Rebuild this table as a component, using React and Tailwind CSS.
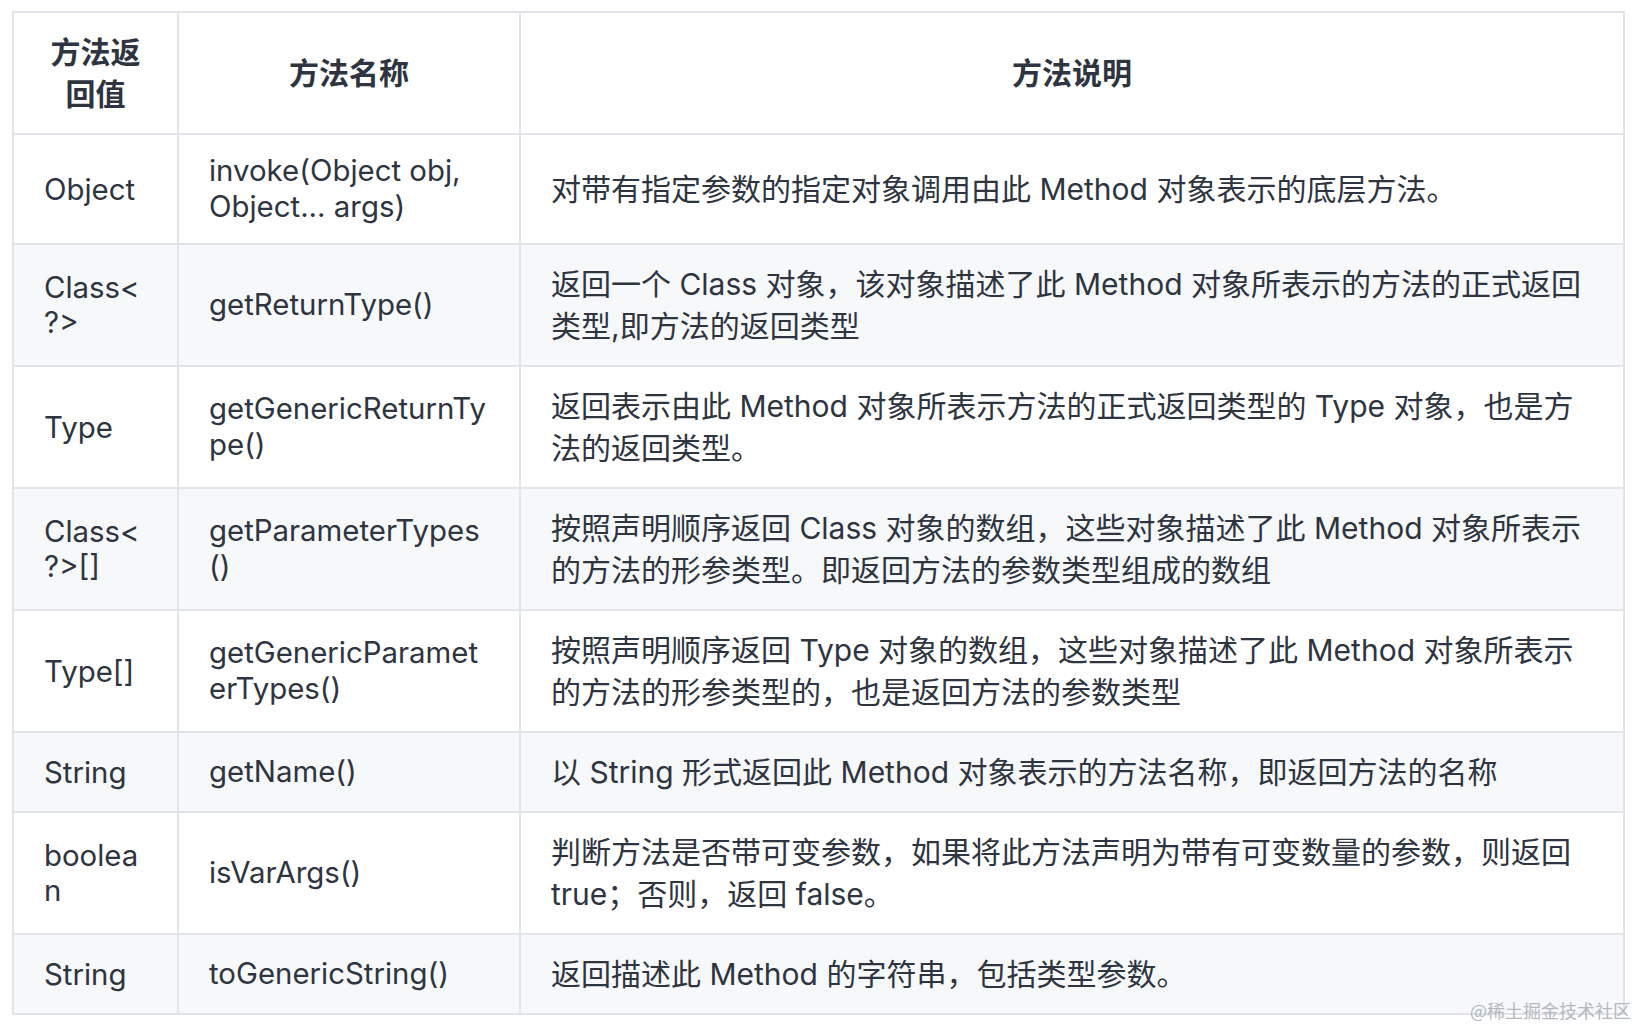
import React from "react";

const rows = [
  ["Object", "invoke(Object obj, Object... args)", "对带有指定参数的指定对象调用由此 Method 对象表示的底层方法。"],
  ["Class<?>", "getReturnType()", "返回一个 Class 对象，该对象描述了此 Method 对象所表示的方法的正式返回类型,即方法的返回类型"],
  ["Type", "getGenericReturnType()", "返回表示由此 Method 对象所表示方法的正式返回类型的 Type 对象，也是方法的返回类型。"],
  ["Class<?>[]", "getParameterTypes()", "按照声明顺序返回 Class 对象的数组，这些对象描述了此 Method 对象所表示的方法的形参类型。即返回方法的参数类型组成的数组"],
  ["Type[]", "getGenericParameterTypes()", "按照声明顺序返回 Type 对象的数组，这些对象描述了此 Method 对象所表示的方法的形参类型的，也是返回方法的参数类型"],
  ["String", "getName()", "以 String 形式返回此 Method 对象表示的方法名称，即返回方法的名称"],
  ["boolean", "isVarArgs()", "判断方法是否带可变参数，如果将此方法声明为带有可变数量的参数，则返回 true；否则，返回 false。"],
  ["String", "toGenericString()", "返回描述此 Method 的字符串，包括类型参数。"],
];

export default function App() {
  return (
    <div
      className="relative min-h-[1026px] w-[1638px] bg-white pl-[12px] pt-[11px] text-[#2e3440]"
      style={{ fontFamily: 'Inter, "Noto Sans CJK SC", sans-serif' }}
    >
      <table className="w-[1613px] table-fixed border-separate border-spacing-0 border-l-2 border-t-2 border-[#e1e4e8] text-[30px]">
        <colgroup>
          <col className="w-[165px]" />
          <col className="w-[342px]" />
          <col className="w-[1104px]" />
        </colgroup>
        <thead>
          <tr>
            <th className="border-b-2 border-r-2 border-[#e1e4e8] px-[30px] py-[18px] text-center align-middle font-semibold leading-[42px]">
              方法返回值
            </th>
            <th className="border-b-2 border-r-2 border-[#e1e4e8] px-[30px] py-[18px] text-center align-middle font-semibold leading-[42px]">
              方法名称
            </th>
            <th className="border-b-2 border-r-2 border-[#e1e4e8] px-[30px] py-[18px] text-center align-middle font-semibold leading-[42px]">
              方法说明
            </th>
          </tr>
        </thead>
        <tbody>
          {rows.map((r, i) => (
            <tr key={i} className={i % 2 === 1 ? "bg-[#f6f8fa]" : "bg-white"}>
              <td className="break-words border-b-2 border-r-2 border-[#e1e4e8] px-[30px] py-[18px] align-middle text-[29.4px] leading-[35px]">
                {r[0]}
              </td>
              <td className="break-words border-b-2 border-r-2 border-[#e1e4e8] px-[30px] py-[18px] align-middle text-[29.4px] leading-[36px]">
                {r[1]}
              </td>
              <td className="break-words border-b-2 border-r-2 border-[#e1e4e8] px-[30px] py-[18px] align-middle leading-[42px]">
                {r[2]}
              </td>
            </tr>
          ))}
        </tbody>
      </table>
      <div
        className="absolute left-[1470px] top-[999px] text-[18px] leading-[22px] text-[#b4b8bf]"
        style={{ fontFamily: '"Noto Sans CJK SC", sans-serif' }}
      >
        @稀土掘金技术社区
      </div>
    </div>
  );
}
